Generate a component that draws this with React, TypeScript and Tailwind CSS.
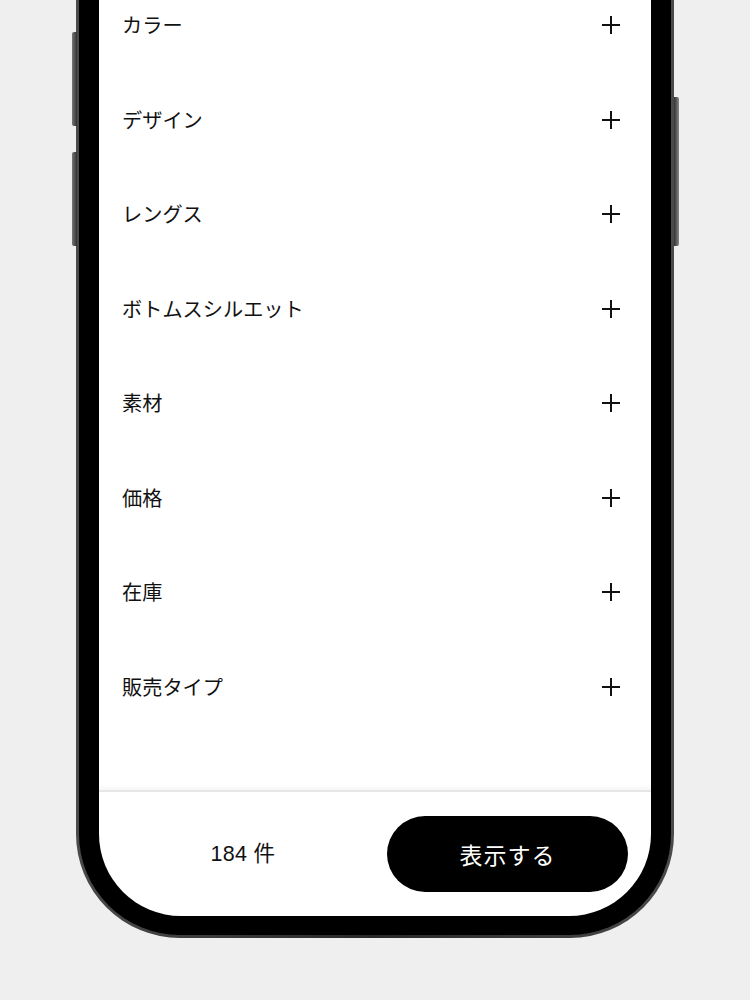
const FILTERS = [
  "カラー",
  "デザイン",
  "レングス",
  "ボトムスシルエット",
  "素材",
  "価格",
  "在庫",
  "販売タイプ",
];

function PlusIcon() {
  return (
    <svg width="20" height="20" viewBox="0 0 20 20" fill="none" className="shrink-0">
      <path d="M10 1v18M1 10h18" stroke="#111" strokeWidth="2" />
    </svg>
  );
}

export default function App() {
  return (
    <div
      className="w-[750px] h-[1000px] bg-[#efefef] overflow-hidden"
      style={{ fontFamily: '"Noto Sans CJK JP", "Noto Sans", sans-serif' }}
    >
      <div className="relative ml-[76px] -mt-[22px] w-[598px]">
        {/* side buttons */}
        <div className="absolute -left-[4px] top-[54px] w-[5px] h-[94px] rounded-l-[2px] bg-gradient-to-r from-[#777] to-[#333]" />
        <div className="absolute -left-[4px] top-[174px] w-[5px] h-[94px] rounded-l-[2px] bg-gradient-to-r from-[#777] to-[#333]" />
        <div className="absolute -right-[5px] top-[119px] w-[5px] h-[149px] rounded-r-[2px] bg-gradient-to-l from-[#888] to-[#333]" />

        {/* frame */}
        <div className="rounded-b-[104px] bg-gradient-to-r from-[#4a4a4a] via-[#2a2a2a] to-[#4a4a4a] px-[3px] pb-[3px]">
          <div className="rounded-b-[101px] bg-black px-[20px] pb-[19px]">
            <div className="bg-white rounded-b-[82px] overflow-hidden flex flex-col">
              <ul className="flex flex-col">
                {FILTERS.map((label) => (
                  <li
                    key={label}
                    className="h-[94.5px] flex items-center justify-between pl-[23px] pr-[30px]"
                  >
                    <span className="text-[20.2px] leading-none text-[#111]">{label}</span>
                    <PlusIcon />
                  </li>
                ))}
              </ul>
              <div className="h-[56px]" />
              <div className="h-[126px] border-t-2 border-[#e6e6e6] shadow-[0_-3px_5px_rgba(0,0,0,0.04)] flex items-center pr-[23px]">
                <div
                  className="flex-1 text-center text-[21.5px] text-[#111] tracking-[0.3px]"
                  style={{ fontFamily: '"Liberation Sans", "Noto Sans CJK JP", sans-serif' }}
                >
                  184 件
                </div>
                <button className="w-[241px] h-[76px] rounded-full bg-black text-white text-[23px] tracking-[1px]">
                  表示する
                </button>
              </div>
            </div>
          </div>
        </div>
      </div>
    </div>
  );
}
